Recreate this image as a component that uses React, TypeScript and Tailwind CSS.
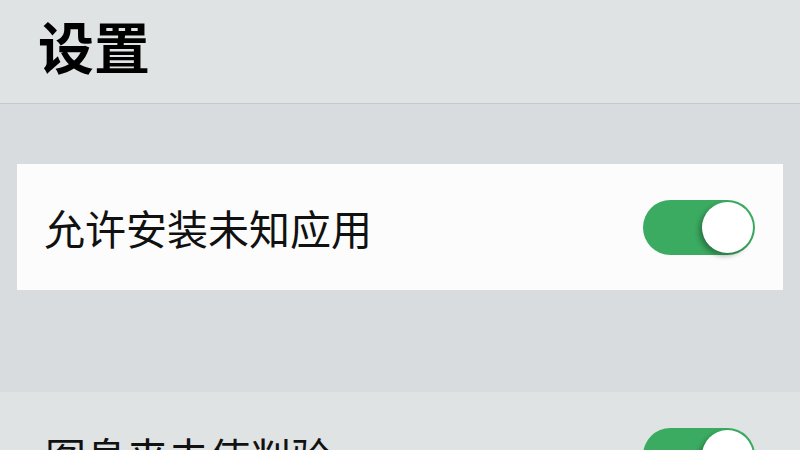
const cjk = "font-['Noto_Sans_CJK_SC','Noto_Sans',sans-serif]";

function Toggle() {
  return (
    <div className="flex h-[55px] w-[112px] shrink-0 items-center justify-end rounded-full bg-[#3aab60] p-[2px]">
      <div className="h-[51px] w-[51px] rounded-full bg-white shadow-[-3px_3px_5px_rgba(0,0,0,0.3)]" />
    </div>
  );
}

export default function App() {
  return (
    <div className={`h-[450px] w-[800px] overflow-hidden bg-[#d9dcdf] ${cjk}`}>
      <header className="flex h-[104px] items-start border-b border-[#c6c9cb] bg-[#dfe3e4] pl-[38px] pt-[12px]">
        <h1 className="text-[56px] font-bold leading-[66px] text-black">设置</h1>
      </header>

      <div className="h-[60px]" />

      <div className="mx-[17px] flex h-[126px] items-center justify-between bg-[#fcfcfc] pl-[27px] pr-[28px]">
        <span className="text-[41px] leading-[48px] text-[#111]">允许安装未知应用</span>
        <Toggle />
      </div>

      <div className="h-[102px]" />

      <div className="flex h-[126px] items-center justify-between bg-[#dfe3e3] pl-[45px] pr-[45px]">
        <span className="text-[41px] leading-[48px] text-[#111]">图息来去使判验</span>
        <Toggle />
      </div>
    </div>
  );
}
